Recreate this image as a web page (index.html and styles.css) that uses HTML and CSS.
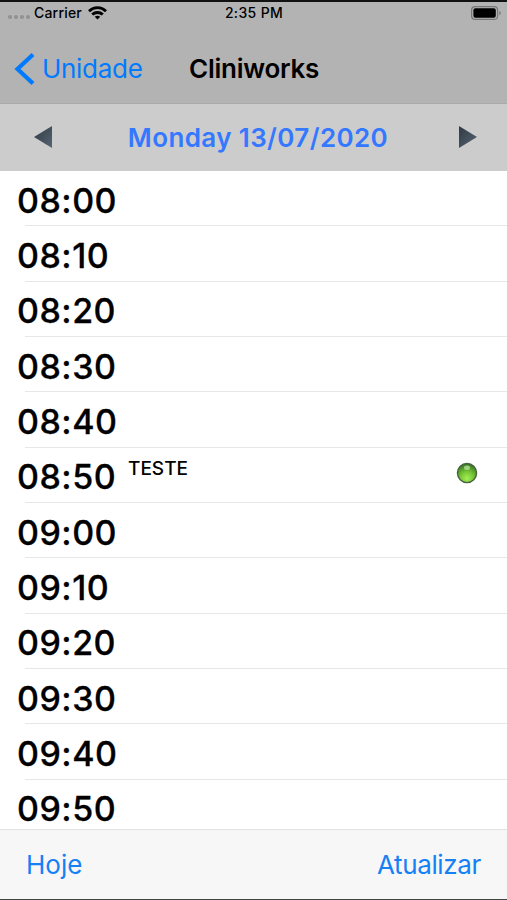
FILE: index.html
```html
<!DOCTYPE html>
<html lang="pt">
<head>
<meta charset="utf-8">
<title>Cliniworks</title>
<link rel="stylesheet" href="styles.css">
</head>
<body>
<div class="screen">
  <header class="top">
    <div class="status">
      <div class="carrier">
        <span class="signal"><i></i><i></i><i></i><i></i></span>
        <span class="carrier-name">Carrier</span>
        <svg class="wifi" width="19" height="14" viewBox="0 0 19 14" fill="none" stroke="#000" stroke-width="2.8"><path d="M1 5.200C5.800.5 13.200.5 18 5.200M4.200 8.600C7.200 5.800 11.800 5.800 14.800 8.600"/><path d="M9.500 13.600 6.700 10.800Q9.500 8.700 12.300 10.800Z" fill="#000" stroke="none"/></svg>
      </div>
      <span class="clock">2:35 PM</span>
      <svg class="battery" width="31" height="14" viewBox="0 0 31 14"><rect x=".6" y=".6" width="26" height="12.800" rx="3.500" fill="none" stroke="#777" stroke-width="1.200"/><rect x="2.400" y="2.300" width="22.400" height="9.400" rx="2" fill="#000"/><path d="M28.300 4.700q3 2.300 0 4.600z" fill="#777"/></svg>
    </div>
    <nav class="nav">
      <a class="back"><svg width="22" height="34" viewBox="0 0 22 34"><path d="M20 2.500 4.500 17 20 31.500" fill="none" stroke="#007aff" stroke-width="4.200"/></svg><span>Unidade</span></a>
      <h1>Cliniworks</h1>
    </nav>
  </header>
  <div class="datebar">
    <svg class="arrow" width="20" height="24" viewBox="0 0 20 24"><defs><linearGradient id="steel" x1="0" y1="0" x2="1" y2="1"><stop offset="0" stop-color="#303a42"/><stop offset="1" stop-color="#566473"/></linearGradient></defs><path d="M19 1v22L1 12z" fill="url(#steel)"/></svg>
    <span class="date">Monday 13/07/2020</span>
    <svg class="arrow" width="20" height="24" viewBox="0 0 20 24"><path d="M1 1v22l18-11z" fill="url(#steel)"/></svg>
  </div>
  <main class="slots">
    <div class="slot"><time>08:00</time></div>
    <div class="slot"><time>08:10</time></div>
    <div class="slot"><time>08:20</time></div>
    <div class="slot"><time>08:30</time></div>
    <div class="slot"><time>08:40</time></div>
    <div class="slot"><time>08:50</time><span class="patient">TESTE</span>
      <svg class="led" width="22" height="22" viewBox="0 0 22 22"><defs><radialGradient id="green" cx=".5" cy=".78" r=".8"><stop offset="0" stop-color="#a5ee55"/><stop offset=".45" stop-color="#75c435"/><stop offset="1" stop-color="#2c6820"/></radialGradient></defs><circle cx="11" cy="11" r="9.600" fill="url(#green)" stroke="#48603f" stroke-width="1.300"/><ellipse cx="11" cy="5.800" rx="3" ry="2.200" fill="#d4f5b8" opacity=".6"/></svg>
    </div>
    <div class="slot"><time>09:00</time></div>
    <div class="slot"><time>09:10</time></div>
    <div class="slot"><time>09:20</time></div>
    <div class="slot"><time>09:30</time></div>
    <div class="slot"><time>09:40</time></div>
    <div class="slot"><time>09:50</time></div>
  </main>
  <footer class="toolbar"><a class="today">Hoje</a><a class="refresh">Atualizar</a></footer>
</div>
</body>
</html>
```
FILE: styles.css
```css
* { box-sizing: border-box; }
body { margin: 0; font-family: Inter, "Liberation Sans", sans-serif; color: #000; background: #fff; }
svg { display: block; flex: none; }
.screen { width: 507px; height: 900px; display: flex; flex-direction: column; overflow: hidden; border-top: 2px solid #111; border-bottom: 1px solid #444; white-space: nowrap; }
.top { height: 102px; flex: none; background: #b3b3b3; border-bottom: 1px solid #aaa; }
.status { height: 23px; display: grid; grid-template-columns: 1fr auto 1fr; align-items: center; padding: 0 5px 2px 8px; font-size: 14px; font-weight: 500; }
.carrier { display: flex; align-items: center; }
.signal { display: flex; gap: 2px; width: 26px; padding-top: 8px; }
.signal i { width: 4px; height: 4px; border-radius: 50%; background: #929292; }
.carrier-name { width: 54px; letter-spacing: 0.2px; }
.clock { margin-left: -2px; letter-spacing: 0.35px; }
.battery { justify-self: end; }
.nav { height: 78px; display: flex; align-items: center; padding: 9px 0 0 13px; }
.back { display: flex; align-items: center; width: 176px; gap: 7px; color: #007aff; font-size: 26px; letter-spacing: -0.3px; }
h1 { margin: 0; font-size: 26px; font-weight: 600; letter-spacing: -0.25px; }
.datebar { height: 67px; flex: none; display: flex; align-items: center; justify-content: space-between; padding: 0 29px 1px 33px; background: #ccc; }
.date { margin-left: 5px; font-size: 26px; font-weight: 600; letter-spacing: 0.38px; color: #3478ff; }
.slots { height: 658px; flex: none; overflow: hidden; }
.slot { height: 55.330px; display: flex; align-items: center; padding: 2.800px 29px 0 17px; background: linear-gradient(#e7e7e7, #e7e7e7) 25px 100% / 100% 1px no-repeat; }
time { width: 111px; font-size: 34px; font-weight: 500; letter-spacing: 0.5px; -webkit-text-stroke: 0.3px #000; }
.patient { font-size: 19px; font-weight: 500; margin-top: -16.500px; }
.led { margin: -7.500px 0 0 auto; }
.toolbar { flex: 1; display: flex; justify-content: space-between; align-items: center; padding: 0 26px 1px; background: #f7f7f7; border-top: 1px solid #e2e2e2; color: #1680f5; font-size: 26px; }
.refresh { letter-spacing: -0.35px; }
```
